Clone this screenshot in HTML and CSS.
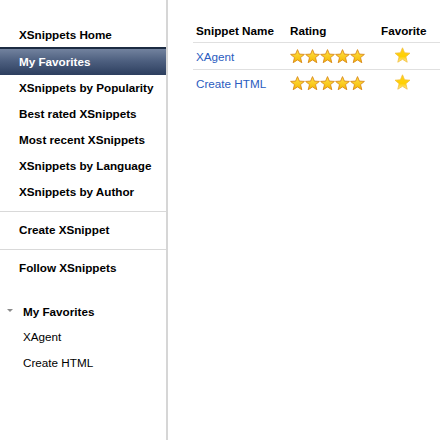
FILE: index.html
```html
<!DOCTYPE html>
<html>
<head>
<meta charset="utf-8">
<link rel="stylesheet" href="styles.css">
</head>
<body>
<div class="page">
  <aside class="sidebar">
    <nav class="section first">
      <a class="nav-item">XSnippets Home</a>
      <a class="nav-item active">My Favorites</a>
      <a class="nav-item">XSnippets by Popularity</a>
      <a class="nav-item">Best rated XSnippets</a>
      <a class="nav-item">Most recent XSnippets</a>
      <a class="nav-item">XSnippets by Language</a>
      <a class="nav-item">XSnippets by Author</a>
    </nav>
    <nav class="section">
      <a class="nav-item">Create XSnippet</a>
    </nav>
    <nav class="section">
      <a class="nav-item">Follow XSnippets</a>
    </nav>
    <div class="tree">
      <div class="tree-head"><span class="twisty"></span>My Favorites</div>
      <a class="tree-item">XAgent</a>
      <a class="tree-item">Create HTML</a>
    </div>
  </aside>
  <main class="content">
    <table class="grid">
      <thead>
        <tr><th class="c-name">Snippet Name</th><th class="c-rating">Rating</th><th class="c-fav">Favorite</th></tr>
      </thead>
      <tbody>
        <tr>
          <td class="c-name"><a class="link">XAgent</a></td>
          <td class="c-rating"><span class="stars"></span></td>
          <td class="c-fav"><span class="fav"></span></td>
        </tr>
        <tr>
          <td class="c-name"><a class="link">Create HTML</a></td>
          <td class="c-rating"><span class="stars"></span></td>
          <td class="c-fav"><span class="fav"></span></td>
        </tr>
      </tbody>
    </table>
  </main>
</div>
<svg width="0" height="0" style="position:absolute">
  <defs>
    <linearGradient id="g1" x1="0" y1="0" x2="0" y2="1">
      <stop offset="0" stop-color="#ffe24a"/>
      <stop offset="1" stop-color="#f5b800"/>
    </linearGradient>
    <linearGradient id="g2" x1="0" y1="0" x2="0" y2="1">
      <stop offset="0" stop-color="#ffd21a"/>
      <stop offset="0.6" stop-color="#ffd000"/>
      <stop offset="1" stop-color="#ffe89a"/>
    </linearGradient>
  </defs>
</svg>
<script>
  var star = '<svg width="15" height="15" viewBox="0 0 15 15"><path d="M7.5 0.6 L9.4 5.1 L14.4 5.4 L10.5 8.6 L11.8 13.7 L7.5 10.9 L3.2 13.7 L4.5 8.6 L0.6 5.4 L5.6 5.1 Z" fill="url(#g1)" stroke="#d98a1c" stroke-width="0.9" stroke-linejoin="round"/></svg>';
  document.querySelectorAll('.stars').forEach(function(s){ s.innerHTML = star+star+star+star+star; });
  var fav = '<svg width="17" height="17" viewBox="0 0 17 17"><path d="M8.5 0.8 L10.6 5.8 L16 6.2 L11.9 9.7 L13.2 15.2 L8.5 12.3 L3.8 15.2 L5.1 9.7 L1 6.2 L6.4 5.8 Z" fill="url(#g2)" stroke="#f2c040" stroke-width="0.8" stroke-linejoin="round"/></svg>';
  document.querySelectorAll('.fav').forEach(function(s){ s.innerHTML = fav; });
</script>
</body>
</html>
```
FILE: styles.css
```css
html, body {
  margin: 0;
  padding: 0;
  background: #fff;
}
body {
  font-family: "Liberation Sans", Arial, sans-serif;
  font-size: 11.7px;
  color: #000;
}
.page {
  display: flex;
  height: 440px;
}
.sidebar {
  width: 166px;
  flex: none;
  border-right: 2px solid #d6d6d6;
  box-sizing: content-box;
  padding-top: 22px;
}
.section {
  display: flex;
  flex-direction: column;
  padding: 5px 0 6px;
  border-top: 1px solid #d9d9d9;
}
.section.first {
  border-top: none;
  padding-top: 0;
}
.nav-item {
  display: block;
  height: 26px;
  line-height: 26px;
  padding-left: 19px;
  font-weight: bold;
  color: #000;
}
.nav-item.active {
  color: #fff;
  height: 26px;
  border-top: 2px solid #1c2b42;
  margin-top: -1px;
  background: linear-gradient(#72829e, #4e6080 45%, #2c3e5e);
  line-height: 25px;
}
.tree {
  padding-top: 11px;
}
.tree-head {
  display: flex;
  align-items: center;
  height: 26px;
  font-weight: bold;
  padding-left: 7px;
}
.twisty {
  width: 0;
  height: 0;
  border-left: 3px solid transparent;
  border-right: 3px solid transparent;
  border-top: 3px solid #8a8a8a;
  margin-right: 10px;
  margin-top: -1px;
}
.tree-item {
  display: block;
  height: 26px;
  line-height: 26px;
  padding-left: 23px;
}
.content {
  flex: 1;
  padding: 18px 0 0 25px;
}
.grid {
  border-collapse: collapse;
  width: 247px;
}
.grid th, .grid td {
  padding: 0 0 0 3px;
  text-align: left;
  vertical-align: middle;
}
.grid th {
  height: 24px;
  font-weight: bold;
  border-bottom: 1px solid #e0e0e0;
}
.grid tbody tr {
  height: 27px;
}
.grid tbody tr:first-child td {
  border-bottom: 1px solid #e0e0e0;
}
.c-name { width: 91px; }
.c-rating { width: 88px; }
.c-fav { text-align: left; }
.grid td.c-fav { padding-left: 16px; }
.link {
  color: #2a5cc0;
}
.stars {
  display: flex;
}
.stars svg, .fav svg { display: block; }
.fav { display: inline-block; }
```
